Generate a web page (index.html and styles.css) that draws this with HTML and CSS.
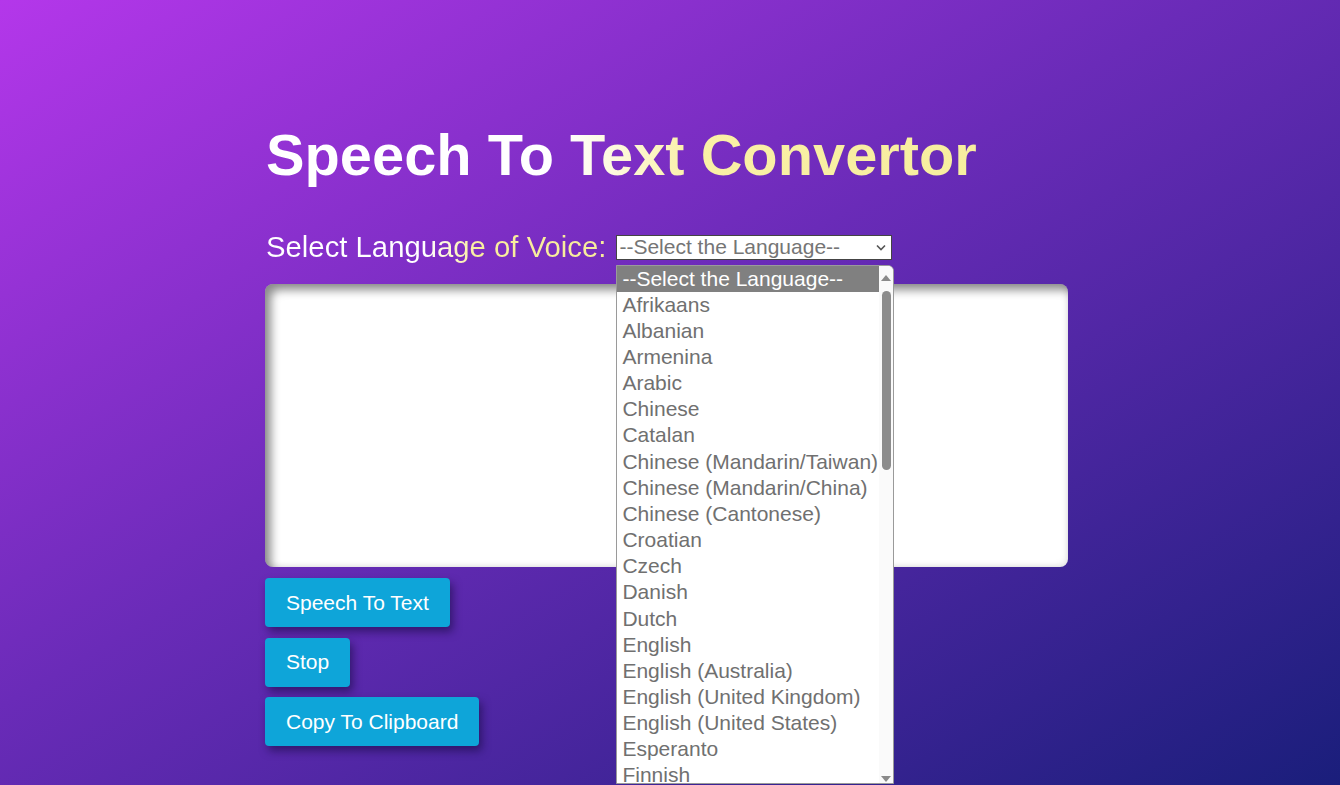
FILE: index.html
```html
<!DOCTYPE html>
<html lang="en">
<head>
<meta charset="utf-8">
<title>Speech To Text Convertor</title>
<link rel="stylesheet" href="styles.css">
</head>
<body>
<main class="app">
  <h1 class="title">Speech To Text Convertor</h1>
  <div class="lang-row">
    <label class="lang-label" for="lang">Select Language of Voice:</label>
    <div class="select-wrap">
      <div class="select" id="lang">
        <span>--Select the Language--</span>
        <svg class="chev" width="10" height="7" viewBox="0 0 10 7"><path d="M1 1.5 L5 5.5 L9 1.5" fill="none" stroke="#555" stroke-width="1.6"/></svg>
      </div>
      <div class="listbox">
        <ul class="options">
          <li class="opt selected">--Select the Language--</li>
          <li class="opt">Afrikaans</li>
          <li class="opt">Albanian</li>
          <li class="opt">Armenina</li>
          <li class="opt">Arabic</li>
          <li class="opt">Chinese</li>
          <li class="opt">Catalan</li>
          <li class="opt">Chinese (Mandarin/Taiwan)</li>
          <li class="opt">Chinese (Mandarin/China)</li>
          <li class="opt">Chinese (Cantonese)</li>
          <li class="opt">Croatian</li>
          <li class="opt">Czech</li>
          <li class="opt">Danish</li>
          <li class="opt">Dutch</li>
          <li class="opt">English</li>
          <li class="opt">English (Australia)</li>
          <li class="opt">English (United Kingdom)</li>
          <li class="opt">English (United States)</li>
          <li class="opt">Esperanto</li>
          <li class="opt">Finnish</li>
          <li class="opt">French</li>
        </ul>
        <div class="scrollbar">
          <svg class="arrow" width="10" height="8" viewBox="0 0 10 8"><path d="M0 7 L5 1 L10 7 Z" fill="#8a8a8a"/></svg>
          <div class="thumb"></div>
          <div class="track-fill"></div>
          <svg class="arrow" width="10" height="8" viewBox="0 0 10 8"><path d="M0 1 L5 7 L10 1 Z" fill="#8a8a8a"/></svg>
        </div>
      </div>
    </div>
  </div>
  <div class="textbox"></div>
  <div class="buttons">
    <button class="btn">Speech To Text</button>
    <button class="btn">Stop</button>
    <button class="btn">Copy To Clipboard</button>
  </div>
</main>
</body>
</html>
```

FILE: styles.css
```css
html, body {
  margin: 0;
  height: 100%;
  overflow: hidden;
}
body {
  background: linear-gradient(to bottom right, #b437ea 0%, #6a2bb8 45%, #1a1e7b 100%);
  font-family: "Liberation Sans", Arial, sans-serif;
}
.app {
  padding: 120px 0 0 265px;
  width: 803px;
}
.title {
  margin: 0 0 0 1px;
  font-size: 57.8px;
  line-height: 70px;
  font-weight: 700;
  display: inline-block;
  background: linear-gradient(to right, #ffffff 42%, #faf0a6 60%, #f7ee9f 100%);
  -webkit-background-clip: text;
  background-clip: text;
  color: transparent;
}
.lang-row {
  display: flex;
  align-items: center;
  gap: 10px;
  margin-top: 39px;
  height: 36px;
}
.lang-label {
  margin-left: 1px;
  font-size: 29.3px;
  background: linear-gradient(to right, #ffffff 47%, #f9ee9e 62%, #f7ec9c 100%);
  -webkit-background-clip: text;
  background-clip: text;
  color: transparent;
}
.select-wrap {
  position: relative;
}
.select {
  box-sizing: border-box;
  width: 276px;
  height: 25px;
  background: #fff;
  border: 1px solid #444;
  display: flex;
  align-items: center;
  justify-content: space-between;
  padding: 0 4px 0 2px;
  font-size: 21px;
  color: #757575;
}
.chev { margin-right: 1px; }
.listbox {
  position: absolute;
  left: 0;
  top: 30px;
  width: 278px;
  height: 519px;
  box-sizing: border-box;
  background: #fff;
  border: 1px solid #9a9a9a;
  border-radius: 0 6px 0 0;
  display: flex;
  overflow: hidden;
  z-index: 5;
}
.options {
  list-style: none;
  margin: 0;
  padding: 0;
  flex: 1;
}
.opt {
  height: 26.17px;
  line-height: 26.17px;
  padding-left: 5px;
  font-size: 21px;
  color: #707070;
  white-space: nowrap;
}
.opt.selected {
  background: #808080;
  color: #fff;
}
.scrollbar {
  width: 14px;
  background: #fafafa;
  display: flex;
  flex-direction: column;
  align-items: center;
  padding-top: 8px;
}
.arrow { flex: none; }
.thumb {
  width: 9px;
  height: 179px;
  margin-top: 9px;
  background: #8c8c8c;
  border-radius: 5px;
}
.track-fill { flex: 1; }
.textbox {
  margin-top: 19px;
  height: 283px;
  background: #fff;
  border-radius: 8px;
  box-shadow: inset 6px 6px 10px rgba(0, 0, 0, 0.45), inset -2px -2px 6px rgba(0,0,0,0.08);
}
.buttons {
  display: flex;
  flex-direction: column;
  align-items: flex-start;
  gap: 10.5px;
  margin-top: 11px;
}
.btn {
  height: 49px;
  padding: 0 21px;
  border: none;
  border-radius: 4px;
  background: #0ea5d9;
  color: #fff;
  font-family: "Liberation Sans", Arial, sans-serif;
  font-size: 21px;
  box-shadow: 3px 5px 8px rgba(20, 10, 60, 0.55);
}
```
